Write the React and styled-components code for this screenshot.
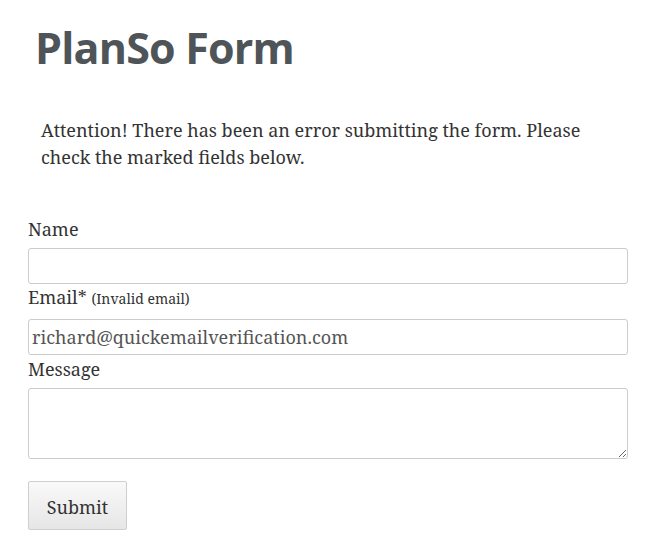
import React from "react";
import styled, { createGlobalStyle } from "styled-components";

const Global = createGlobalStyle`
  body { margin: 0; background: #fff; }
  * { box-sizing: border-box; }
`;

const Page = styled.div`
  padding: 0 30px 0 28px;
  font-family: "Noto Serif", "DejaVu Serif Condensed", "DejaVu Serif", serif;
  color: #333;
`;

const Title = styled.h1`
  margin: 0;
  padding: 18px 0 0 7px;
  font-family: "Open Sans", sans-serif;
  font-weight: 700;
  font-size: 43px;
  line-height: 60px;
  letter-spacing: -0.8px;
  color: #4f5459;
`;

const Notice = styled.p`
  margin: 39px 0 0;
  padding: 0 13px;
  font-size: 18px;
  line-height: 27px;
`;

const Form = styled.form`
  margin-top: 52px;
  display: flex;
  flex-direction: column;
  align-items: flex-start;
`;

const Label = styled.label`
  display: block;
  font-size: 18px;
  line-height: 13px;
  margin: ${(p) => p.$mt || 0}px 0 ${(p) => p.$mb || 0}px;
`;

const Hint = styled.span`
  font-size: 14px;
  line-height: 0;
`;

const Input = styled.input`
  display: block;
  width: 600px;
  height: 36px;
  margin: 0;
  border: 1px solid #ccc;
  border-radius: 3px;
  padding: 0 3px;
  font-family: inherit;
  font-size: 18px;
  color: #555;
  background: #fff;
`;

const TextArea = styled.textarea`
  display: block;
  width: 600px;
  height: 71px;
  margin: 0 0 22px;
  border: 1px solid #ccc;
  border-radius: 3px;
  font-family: inherit;
  background: #fff;
`;

const Button = styled.button`
  width: 99px;
  height: 49px;
  border: 1px solid #cfcfcf;
  border-radius: 2px;
  background: linear-gradient(#f9f9f9, #e6e6e6);
  box-shadow: 0 1px 1px rgba(0, 0, 0, 0.06);
  font-family: inherit;
  font-size: 18px;
  color: #333;
  padding: 3px 0 0;
`;

export default function App() {
  return (
    <>
      <Global />
      <Page>
        <Title>PlanSo Form</Title>
        <Notice>
          Attention! There has been an error submitting the form. Please check the marked fields below.
        </Notice>
        <Form>
          <Label $mb={11.5}>Name</Label>
          <Input type="text" />
          <Label $mt={7.5} $mb={14.5}>
            Email* <Hint>(Invalid email)</Hint>
          </Label>
          <Input type="text" defaultValue="richard@quickemailverification.com" />
          <Label $mt={8} $mb={12}>Message</Label>
          <TextArea />
          <Button type="button">Submit</Button>
        </Form>
      </Page>
    </>
  );
}
